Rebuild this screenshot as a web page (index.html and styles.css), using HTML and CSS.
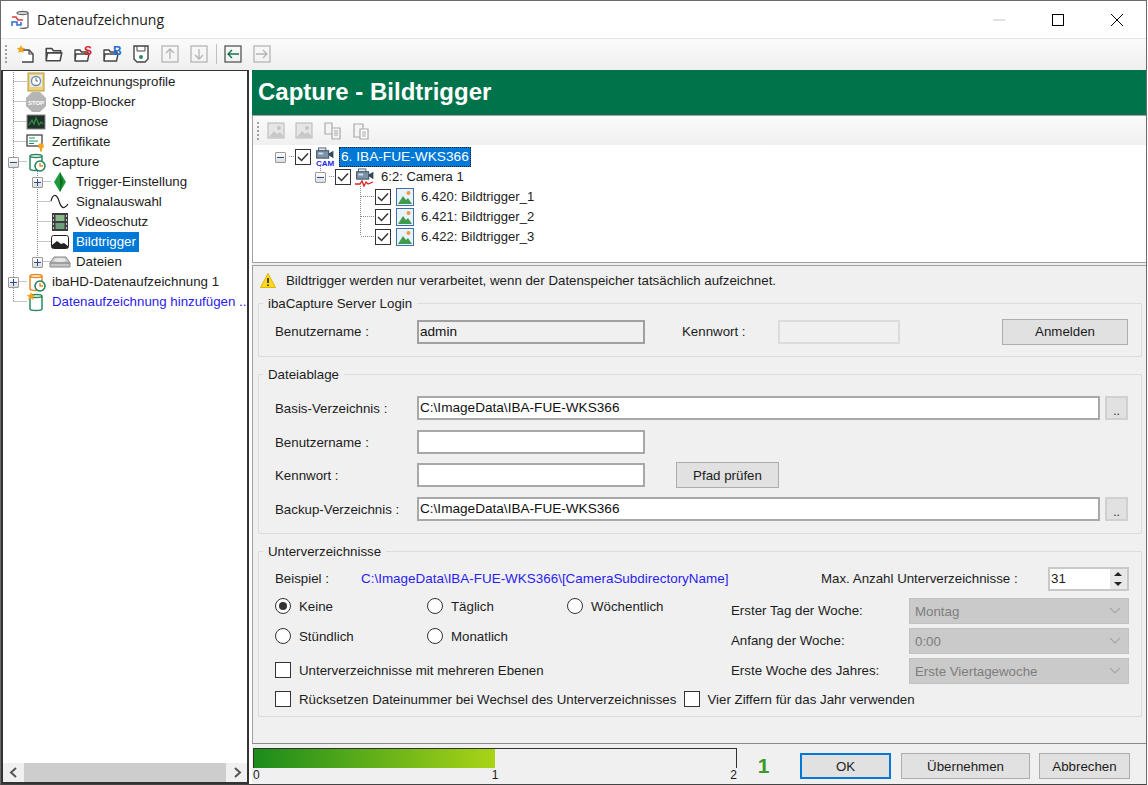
FILE: index.html
```html
<!DOCTYPE html>
<html lang="de">
<head>
    <meta charset="UTF-8">
    <title>Datenaufzeichnung</title>
    <link rel="stylesheet" href="styles.css">
</head>
<body>
<svg class="defs" width="0" height="0">
    <symbol id="i-cyl" viewBox="0 0 20 20"><path d="M4 4c0-2 12-2 12 0v13c0 2-12 2-12 0zM4 4c0 2 12 2 12 0" fill="#fff" stroke="currentColor" stroke-width="1.5"/></symbol>
    <symbol id="i-folder" viewBox="0 0 18 18"><path d="M2 15V4h5l1.500 2H15v2M2 15l1-7h13l-1.500 7z" fill="#fff" stroke="#444" stroke-width="1.400" stroke-linejoin="round"/></symbol>
    <symbol id="i-camera" viewBox="0 0 20 14"><rect x="1" y="4" width="13" height="8" fill="#7b93a8" stroke="#33475a"/><rect x="3" y="1" width="8" height="3" fill="#dfe6ec" stroke="#33475a" stroke-width=".8"/><path d="M14 7l5-3v8l-5-3z" fill="#33475a"/><rect x="3" y="6" width="5" height="2" fill="#d8e2ea"/></symbol>
    <symbol id="i-pic" viewBox="0 0 18 18"><rect x=".5" y=".5" width="17" height="17" fill="#eaf2fa" stroke="#3f6fa8"/><circle cx="12.500" cy="5" r="2" fill="#ef9a3c"/><path d="M2 16l5-8 3 4 2-2 4 6z" fill="#3f9c4b"/></symbol>
    <symbol id="i-pic-off" viewBox="0 0 20 20"><rect x="1" y="2" width="16" height="15" fill="#e6e6e6" stroke="#b5b5b5"/><circle cx="12" cy="7" r="2" fill="#c4c4c4"/><path d="M2 16l5-6 3 3 3-2 4 5z" fill="#c8c8c8"/></symbol>
    <symbol id="i-copy" viewBox="0 0 20 20"><path d="M2 2h7v11H2zM9 7h8v11H9z" fill="#f4f4f4" stroke="#a9a9a9" stroke-width="1.200"/><path d="M11 10h4M11 12h4M11 14h4" stroke="#a9a9a9"/></symbol>
    <symbol id="i-paste" viewBox="0 0 20 20"><path d="M3 3h9v13H3z" fill="#f4f4f4" stroke="#a9a9a9" stroke-width="1.200"/><path d="M9 8h8v10H9z" fill="#fff" stroke="#a9a9a9" stroke-width="1.200"/><path d="M11 11h4M11 13h4M11 15h4" stroke="#a9a9a9"/></symbol>
    <symbol id="i-check" viewBox="0 0 16 16"><path d="M3 8l3.500 3.500L13 4.500" fill="none" stroke="#333" stroke-width="1.500"/></symbol>
    <symbol id="i-chev" viewBox="0 0 12 8"><path d="M1 1l5 5 5-5" fill="none" stroke="#a8a8a8" stroke-width="1.200"/></symbol>
    <symbol id="i-clock" viewBox="0 0 12 12"><circle cx="6" cy="6" r="5" fill="#fff" stroke="#1f7f55" stroke-width="1.500"/><path d="M6 3v3h3" fill="none" stroke="#e8891d" stroke-width="1.300"/></symbol>
</svg>

<div class="window">
    <div class="titlebar">
        <svg class="app-icon" width="20" height="20" viewBox="0 0 20 20">
            <path d="M6 3c0-2 11-2 11 0v14c0 1.500-7 1.500-8 1" fill="#fff" stroke="#666" stroke-width="1.300"/>
            <path d="M6 3c0 2 11 2 11 0" fill="none" stroke="#666" stroke-width="1.300"/>
            <path d="M1 7h4l2 3h5" fill="none" stroke="#e23b3b" stroke-width="1.500"/>
            <path d="M1 16v-4h5v3h4v-3" fill="none" stroke="#2a6fd0" stroke-width="1.500"/>
        </svg>
        <span class="title">Datenaufzeichnung</span>
        <div class="winbtns">
            <svg width="12" height="12" viewBox="0 0 12 12"><path d="M0 6h12" stroke="#c4c4c4"/></svg>
            <svg width="12" height="12" viewBox="0 0 12 12"><rect x=".5" y=".5" width="11" height="11" fill="none" stroke="#000"/></svg>
            <svg width="12" height="12" viewBox="0 0 12 12"><path d="M0 0l12 12M12 0L0 12" stroke="#000"/></svg>
        </div>
    </div>

    <div class="toolbar">
        <span class="grip"></span>
        <svg class="tb tb-first" width="20" height="20" viewBox="0 0 20 20"><path d="M6 6h7l4 4v8H6" fill="#fff" stroke="#444" stroke-width="1.400"/><path d="M13 6v4h4" fill="none" stroke="#444" stroke-width="1.200"/><path d="M5 1l1.300 2.800 3 .3-2.200 2 .7 3L5 7.600 2.200 9.100l.7-3-2.200-2 3-.3z" fill="#f2a31c"/></svg>
        <svg class="tb" width="20" height="20"><use href="#i-folder"/></svg>
        <svg class="tb" width="20" height="20" viewBox="0 0 20 20"><use href="#i-folder" width="18" height="18" y="2"/><text x="11" y="11" class="tb-letter red">S</text></svg>
        <svg class="tb" width="20" height="20" viewBox="0 0 20 20"><use href="#i-folder" width="18" height="18" y="2"/><text x="11" y="11" class="tb-letter blue">B</text></svg>
        <svg class="tb" width="20" height="20" viewBox="0 0 20 20"><path d="M3 2h14v13l-3 3H6l-3-3z" fill="#fff" stroke="#444" stroke-width="1.400"/><path d="M6 2v5h8V2" fill="none" stroke="#444"/><circle cx="10" cy="13" r="2" fill="#2c8a5c"/></svg>
        <svg class="tb" width="20" height="20" viewBox="0 0 20 20"><rect x="2" y="2" width="16" height="16" fill="none" stroke="#b4b4b4" stroke-width="1.300"/><path d="M10 15V5M6 9l4-4 4 4" fill="none" stroke="#b4b4b4" stroke-width="1.300"/></svg>
        <svg class="tb" width="20" height="20" viewBox="0 0 20 20"><rect x="2" y="2" width="16" height="16" fill="none" stroke="#b4b4b4" stroke-width="1.300"/><path d="M10 5v10M6 11l4 4 4-4" fill="none" stroke="#b4b4b4" stroke-width="1.300"/></svg>
        <span class="tb-sep"></span>
        <svg class="tb" width="20" height="20" viewBox="0 0 20 20"><rect x="2" y="2" width="16" height="16" fill="none" stroke="#555" stroke-width="1.300"/><path d="M16 10H5M9 6l-4 4 4 4" fill="none" stroke="#11794f" stroke-width="1.400"/></svg>
        <svg class="tb" width="20" height="20" viewBox="0 0 20 20"><rect x="2" y="2" width="16" height="16" fill="none" stroke="#b4b4b4" stroke-width="1.300"/><path d="M4 10h11M11 6l4 4-4 4" fill="none" stroke="#b4b4b4" stroke-width="1.300"/></svg>
    </div>

    <div class="main">
        <!-- left navigation tree -->
        <div class="nav">
            <div class="nav-tree">
                <svg class="guides" width="244" height="240">
                    <path d="M10.500 0v229M10.500 9.500h14M10.500 29.500h14M10.500 49.500h14M10.500 69.500h14M10.500 89.500h14M10.500 209.500h14M10.500 229.500h14M34.500 99v90M34.500 109.500h14M34.500 129.500h14M34.500 149.500h14M34.500 169.500h14M34.500 189.500h14" fill="none" stroke="#8a8a8a" stroke-dasharray="1 1"/>
                </svg>
                <div class="node"><span class="slot"></span><span class="slot-icon">
                    <svg width="20" height="20" viewBox="0 0 20 20"><rect x="2" y="1" width="16" height="18" fill="#ecd27a" stroke="#b5963c"/><rect x="4" y="3" width="12" height="12" fill="#dfe9f2"/><circle cx="10" cy="9" r="4.500" fill="#fff" stroke="#6d89a6" stroke-width="1.300"/><path d="M10 6v3h2" fill="none" stroke="#567"/></svg>
                </span><span class="node-text">Aufzeichnungsprofile</span></div>
                <div class="node"><span class="slot"></span><span class="slot-icon">
                    <svg width="22" height="20" viewBox="0 0 22 20"><path d="M7 0h8l6 6v8l-6 6H7l-6-6V6z" fill="#b5b5b5"/><text x="11" y="12.500" class="stop-text">STOP</text></svg>
                </span><span class="node-text">Stopp-Blocker</span></div>
                <div class="node"><span class="slot"></span><span class="slot-icon">
                    <svg width="20" height="18" viewBox="0 0 20 18"><rect x="1" y="2" width="18" height="14" fill="#20302a" stroke="#888"/><path d="M3 12l3-5 2 4 2-6 3 7 2-3 2 2" fill="none" stroke="#2f8f3f" stroke-width="1.300"/></svg>
                </span><span class="node-text">Diagnose</span></div>
                <div class="node"><span class="slot"></span><span class="slot-icon">
                    <svg width="20" height="20" viewBox="0 0 20 20"><rect x="1" y="3" width="15" height="11" fill="#fff" stroke="#444" stroke-width="1.300"/><path d="M3 6h6M3 9h9M3 11.500h5" stroke="#1e9468"/><circle cx="15" cy="14" r="2.800" fill="#f2a31c"/><path d="M14 16v4l1-1 1 1v-4" fill="#f2a31c"/></svg>
                </span><span class="node-text">Zertifikate</span></div>
                <div class="node"><span class="slot"><span class="exp minus"></span></span><span class="slot-icon capture">
                    <svg width="20" height="20"><use href="#i-cyl"/><use href="#i-clock" x="8" y="8" width="12" height="12"/></svg>
                </span><span class="node-text">Capture</span></div>
                <div class="node l1"><span class="slot"><span class="exp plus"></span></span><span class="slot-icon">
                    <svg width="14" height="20" viewBox="0 0 14 20"><path d="M7 0l6 10-6 10-6-10z" fill="#1f9a3a"/><path d="M7 0l3 10-3 10z" fill="#0f6b26"/></svg>
                </span><span class="node-text">Trigger-Einstellung</span></div>
                <div class="node l1"><span class="slot"></span><span class="slot-icon">
                    <svg width="20" height="16" viewBox="0 0 20 16"><path d="M1 7c2-8 6-7 8 0s5 9 9 3" fill="none" stroke="#222" stroke-width="1.200"/></svg>
                </span><span class="node-text">Signalauswahl</span></div>
                <div class="node l1"><span class="slot"></span><span class="slot-icon">
                    <svg width="16" height="20" viewBox="0 0 16 20"><rect x="0" y="1" width="16" height="18" fill="#3c3c3c"/><rect x="3.500" y="3" width="9" height="6" fill="#8ab88a"/><rect x="3.500" y="11" width="9" height="6" fill="#6f9f7a"/><path d="M1.500 3v14M14.500 3v14" stroke="#ccc" stroke-dasharray="2 2"/></svg>
                </span><span class="node-text">Videoschutz</span></div>
                <div class="node l1"><span class="slot"></span><span class="slot-icon">
                    <svg width="18" height="14" viewBox="0 0 18 14"><rect x=".5" y=".5" width="17" height="13" rx="2" fill="#fff" stroke="#222"/><path d="M1 13V10l5-4 4 3 3-1 4 3v2z" fill="#222"/></svg>
                </span><span class="node-text selected">Bildtrigger</span></div>
                <div class="node l1"><span class="slot"><span class="exp plus"></span></span><span class="slot-icon">
                    <svg width="22" height="14" viewBox="0 0 22 14"><path d="M5 2h12l4 6v4H1V8z" fill="#c6c6c6" stroke="#888"/><path d="M1 8h20" stroke="#777"/><ellipse cx="11" cy="5" rx="6" ry="2" fill="#e8e8e8"/></svg>
                </span><span class="node-text">Dateien</span></div>
                <div class="node"><span class="slot"><span class="exp plus"></span></span><span class="slot-icon hd">
                    <svg width="20" height="20"><use href="#i-cyl"/><use href="#i-clock" x="8" y="8" width="12" height="12"/></svg>
                </span><span class="node-text">ibaHD-Datenaufzeichnung 1</span></div>
                <div class="node"><span class="slot"></span><span class="slot-icon capture">
                    <svg width="20" height="20" viewBox="0 0 20 20"><use href="#i-cyl"/><path d="M5 0l1.300 2.800 3 .3-2.200 2 .7 3L5 6.600 2.200 8.100l.7-3-2.200-2 3-.3z" fill="#f2a31c"/></svg>
                </span><span class="node-text add">Datenaufzeichnung hinzufügen ...</span></div>
            </div>
            <div class="hscroll">
                <svg width="21" height="19" viewBox="0 0 21 19"><path d="M13 5l-5 4.500 5 4.500" fill="none" stroke="#555" stroke-width="2"/></svg>
                <span class="thumb"></span>
                <svg width="21" height="19" viewBox="0 0 21 19"><path d="M9 5l5 4.500-5 4.500" fill="none" stroke="#555" stroke-width="2"/></svg>
            </div>
        </div>

        <div class="content">
            <div class="header">Capture - Bildtrigger</div>

            <div class="trigger-panel">
                <div class="subtoolbar">
                    <span class="grip"></span>
                    <svg class="tb2" width="20" height="20"><use href="#i-pic-off"/></svg>
                    <svg class="tb2" width="20" height="20"><use href="#i-pic-off"/></svg>
                    <svg class="tb2" width="20" height="20"><use href="#i-copy"/></svg>
                    <svg class="tb2" width="20" height="20"><use href="#i-paste"/></svg>
                </div>
                <div class="cam-tree">
                    <svg class="guides" width="130" height="100">
                        <path d="M36 10.500h10M67.500 20v10M76 30.500h10M107.500 40v50M108 50.500h16M108 70.500h16M108 90.500h16" fill="none" stroke="#8a8a8a" stroke-dasharray="1 1"/>
                    </svg>
                    <div class="cam-row">
                        <span class="slot"><span class="exp minus"></span></span>
                        <span class="tick"><svg width="16" height="16"><use href="#i-check"/></svg></span>
                        <span class="cam-icon">
                            <svg width="20" height="13"><use href="#i-camera"/></svg>
                            <span class="cam-label">CAM</span>
                        </span>
                        <span class="cam-text focused">6. IBA-FUE-WKS366</span>
                    </div>
                    <div class="cam-row lvl1">
                        <span class="slot"><span class="exp minus"></span></span>
                        <span class="tick"><svg width="16" height="16"><use href="#i-check"/></svg></span>
                        <span class="cam-icon">
                            <svg width="20" height="19" viewBox="0 0 20 19"><use href="#i-camera" width="20" height="13"/><path d="M0 16h5l2-3 2 5 2-4 2 2 5-2" fill="none" stroke="#e02020" stroke-width="1.300"/></svg>
                        </span>
                        <span class="cam-text">6:2: Camera 1</span>
                    </div>
                    <div class="cam-row lvl2">
                        <span class="slot"></span>
                        <span class="tick"><svg width="16" height="16"><use href="#i-check"/></svg></span>
                        <span class="cam-icon"><svg width="18" height="18"><use href="#i-pic"/></svg></span>
                        <span class="cam-text">6.420: Bildtrigger_1</span>
                    </div>
                    <div class="cam-row lvl2">
                        <span class="slot"></span>
                        <span class="tick"><svg width="16" height="16"><use href="#i-check"/></svg></span>
                        <span class="cam-icon"><svg width="18" height="18"><use href="#i-pic"/></svg></span>
                        <span class="cam-text">6.421: Bildtrigger_2</span>
                    </div>
                    <div class="cam-row lvl2">
                        <span class="slot"></span>
                        <span class="tick"><svg width="16" height="16"><use href="#i-check"/></svg></span>
                        <span class="cam-icon"><svg width="18" height="18"><use href="#i-pic"/></svg></span>
                        <span class="cam-text">6.422: Bildtrigger_3</span>
                    </div>
                </div>
            </div>

            <div class="form-panel">
                <div class="warning">
                    <svg width="16" height="15" viewBox="0 0 16 15"><path d="M8 .5L15.500 14.500H.5z" fill="#ffd91c" stroke="#e0b500"/><path d="M8 5v5M8 11.500v1.500" stroke="#222" stroke-width="1.600"/></svg>
                    <span>Bildtrigger werden nur verarbeitet, wenn der Datenspeicher tatsächlich aufzeichnet.</span>
                </div>

                <fieldset class="group group-login">
                    <legend>ibaCapture Server Login</legend>
                    <div class="login-row">
                        <label class="lbl">Benutzername :</label>
                        <div class="input readonly w-short">admin</div>
                        <label class="lbl lbl-pw">Kennwort :</label>
                        <div class="input off w-pw"></div>
                        <button class="btn btn-login">Anmelden</button>
                    </div>
                </fieldset>

                <fieldset class="group group-files">
                    <legend>Dateiablage</legend>
                    <div class="files-grid">
                        <label class="lbl">Basis-Verzeichnis :</label>
                        <div class="input w-long">C:\ImageData\IBA-FUE-WKS366</div>
                        <button class="btn btn-dots">..</button>

                        <label class="lbl">Benutzername :</label>
                        <div class="input w-short"></div>
                        <span></span>

                        <label class="lbl">Kennwort :</label>
                        <div class="pw-row">
                            <div class="input w-short"></div>
                            <button class="btn btn-path">Pfad prüfen</button>
                        </div>
                        <span></span>

                        <label class="lbl">Backup-Verzeichnis :</label>
                        <div class="input w-long">C:\ImageData\IBA-FUE-WKS366</div>
                        <button class="btn btn-dots">..</button>
                    </div>
                </fieldset>

                <fieldset class="group group-sub">
                    <legend>Unterverzeichnisse</legend>
                    <div class="sub-top">
                        <label class="lbl lbl-sample">Beispiel :</label>
                        <span class="sample">C:\ImageData\IBA-FUE-WKS366\[CameraSubdirectoryName]</span>
                        <label class="lbl lbl-max">Max. Anzahl Unterverzeichnisse :</label>
                        <div class="spin">
                            <span class="spin-val">31</span>
                            <span class="spin-btns">
                                <svg width="16" height="10" viewBox="0 0 16 10"><path d="M8 3l-4 4h8z" fill="#222"/></svg>
                                <svg width="16" height="10" viewBox="0 0 16 10"><path d="M8 7L4 3h8z" fill="#222"/></svg>
                            </span>
                        </div>
                    </div>
                    <div class="sub-mid">
                        <div class="options">
                            <div class="opt"><span class="radio on"></span>Keine</div>
                            <div class="opt"><span class="radio"></span>Täglich</div>
                            <div class="opt"><span class="radio"></span>Wöchentlich</div>
                            <div class="opt"><span class="radio"></span>Stündlich</div>
                            <div class="opt"><span class="radio"></span>Monatlich</div>
                            <div class="opt"></div>
                            <div class="opt opt-wide"><span class="box"></span>Unterverzeichnisse mit mehreren Ebenen</div>
                        </div>
                        <div class="week">
                            <label class="lbl">Erster Tag der Woche:</label>
                            <div class="select">Montag<svg width="12" height="8"><use href="#i-chev"/></svg></div>
                            <label class="lbl">Anfang der Woche:</label>
                            <div class="select">0:00<svg width="12" height="8"><use href="#i-chev"/></svg></div>
                            <label class="lbl">Erste Woche des Jahres:</label>
                            <div class="select">Erste Viertagewoche<svg width="12" height="8"><use href="#i-chev"/></svg></div>
                        </div>
                    </div>
                    <div class="sub-bottom">
                        <div class="opt"><span class="box"></span>Rücksetzen Dateinummer bei Wechsel des Unterverzeichnisses</div>
                        <div class="opt opt-year"><span class="box"></span>Vier Ziffern für das Jahr verwenden</div>
                    </div>
                </fieldset>
            </div>

            <div class="footer">
                <div class="meter">
                    <div class="meter-track"><div class="meter-fill"></div></div>
                    <div class="meter-scale"><span>0</span><span>1</span><span>2</span></div>
                </div>
                <span class="count">1</span>
                <button class="btn btn-ok">OK</button>
                <button class="btn btn-apply">Übernehmen</button>
                <button class="btn btn-cancel">Abbrechen</button>
            </div>
        </div>
    </div>
</div>
</body>
</html>
```

FILE: styles.css
```css
* {
    box-sizing: border-box;
}
html, body {
    margin: 0;
    height: 100%;
    background: #fff;
}
body {
    font-family: "Liberation Sans", Arial, sans-serif;
    font-size: 13.3px;
    color: #1c1c1c;
    overflow: hidden;
}
.defs {
    position: absolute;
}
.window {
    width: 1147px;
    height: 785px;
    display: flex;
    flex-direction: column;
    border-top: 1px solid #6a6a6a;
    border-left: 1px solid #6a6a6a;
    border-right: 1px solid #6a6a6a;
    border-bottom: 1px solid #444;
}

/* title bar */
.titlebar {
    height: 37px;
    display: flex;
    align-items: center;
    padding-left: 10px;
    background: #fff;
}
.app-icon {
    margin-right: 6px;
}
.title {
    font-family: "Open Sans", "Liberation Sans", sans-serif;
    font-size: 14px;
}
.winbtns {
    margin-left: auto;
    display: flex;
    gap: 47px;
    padding-right: 23px;
}

/* toolbars */
.toolbar {
    height: 32px;
    display: flex;
    align-items: center;
    padding: 0 0 2px 4px;
    background: linear-gradient(#fbfbfb, #efefef);
    border-top: 1px solid #e6e6e6;
}
.grip {
    width: 2px;
    height: 18px;
    margin-right: 9px;
    background: repeating-linear-gradient(#a0a0a0 0 2px, transparent 2px 4px);
}
.tb {
    margin-right: 9px;
}
.tb-first {
    margin-right: 8px;
}
.tb-sep {
    width: 1px;
    height: 20px;
    margin: 0 6px 0 -2px;
    background: #c0c0c0;
}
.tb-letter {
    font-family: "Liberation Sans", sans-serif;
    font-size: 12px;
    font-weight: bold;
}
.red {
    fill: #e0202c;
}
.blue {
    fill: #2a6fd0;
}

.main {
    flex: 1;
    display: flex;
    min-height: 0;
}

/* navigation tree */
.nav {
    width: 248px;
    margin-right: 3px;
    display: flex;
    flex-direction: column;
    background: #fff;
    border-top: 1px solid #333;
    border-left: 2px solid #333;
    border-right: 2px solid #333;
    border-bottom: 2px solid #333;
}
.nav-tree {
    flex: 1;
    position: relative;
    overflow: hidden;
    padding-top: 1px;
}
.guides {
    position: absolute;
    left: 0;
    top: 1px;
}
.node {
    height: 20px;
    display: flex;
    align-items: center;
    position: relative;
    white-space: nowrap;
}
.node.l1 {
    padding-left: 24px;
}
.slot {
    width: 20px;
    flex: none;
    display: flex;
    align-items: center;
    justify-content: center;
}
.slot-icon {
    width: 26px;
    flex: none;
    display: flex;
    justify-content: center;
    align-items: center;
}
.slot-icon svg {
    display: block;
}
.capture {
    color: #2a8a5e;
}
.hd {
    color: #e8891d;
}
.node-text {
    padding: 0 3px;
    line-height: 20px;
}
.selected {
    background: #0078d7;
    color: #fff;
}
.add {
    color: #2a1cf0;
}
.exp {
    width: 11px;
    height: 11px;
    border: 1px solid #9a9a9a;
    border-radius: 1px;
    background: linear-gradient(#fff, #dcdcdc);
    position: relative;
}
.exp::before {
    content: "";
    position: absolute;
    left: 1px;
    top: 4px;
    width: 7px;
    height: 1px;
    background: #2b4a8b;
}
.exp.plus::after {
    content: "";
    position: absolute;
    left: 4px;
    top: 1px;
    width: 1px;
    height: 7px;
    background: #2b4a8b;
}
.hscroll {
    height: 19px;
    display: flex;
    align-items: center;
    background: #f0f0f0;
}
.thumb {
    flex: 1;
    height: 19px;
    background: #cdcdcd;
}

/* right side */
.content {
    flex: 1;
    min-width: 0;
    display: flex;
    flex-direction: column;
    background: #f0f0f0;
}
.header {
    height: 45px;
    padding-left: 6px;
    background: #00734a;
    color: #fff;
    font-size: 24px;
    font-weight: bold;
    line-height: 44px;
}
.trigger-panel {
    height: 148px;
    background: #fff;
    border-top: 1px solid #a0a0a0;
    border-left: 1px solid #a0a0a0;
    border-bottom: 1px solid #a0a0a0;
}
.subtoolbar {
    height: 29px;
    display: flex;
    align-items: center;
    padding-left: 4px;
    background: linear-gradient(#fbfbfb, #f0f0f0);
}
.subtoolbar .grip {
    margin-right: 8px;
}
.tb2 {
    margin-right: 8px;
}
.cam-tree {
    position: relative;
    padding: 2px 0 0 17px;
}
.cam-row {
    height: 20px;
    display: flex;
    align-items: center;
    position: relative;
    white-space: nowrap;
}
.cam-row.lvl1 {
    padding-left: 40px;
}
.cam-row.lvl2 {
    padding-left: 80px;
}
.tick {
    width: 16px;
    height: 16px;
    margin-left: 5px;
    border: 1px solid #333;
    background: #fff;
    flex: none;
}
.tick svg {
    display: block;
    margin: -1px;
}
.cam-icon {
    width: 26px;
    flex: none;
    margin-left: 1px;
    display: flex;
    flex-direction: column;
    align-items: center;
    line-height: 8px;
}
.cam-label {
    font-size: 8px;
    font-weight: bold;
    color: #1c28e0;
}
.cam-text {
    margin-left: 1px;
    padding: 0 2px;
    line-height: 20px;
    font-size: 13.05px;
}
.cam-text.focused {
    font-size: 13.7px;
    background: #0078d7;
    color: #fff;
    outline: 1px dotted #222;
    outline-offset: -1px;
}
.stop-text {
    font-family: "Liberation Sans", sans-serif;
    font-size: 6px;
    font-weight: bold;
    fill: #fff;
    text-anchor: middle;
}

/* form */
.form-panel {
    height: 479px;
    margin-top: 2px;
    padding: 0 4px 0 5px;
    border-top: 1px solid #a0a0a0;
    border-left: 1px solid #a0a0a0;
    border-bottom: 1px solid #8a8a8a;
}
.warning {
    height: 29px;
    display: flex;
    align-items: center;
    gap: 10px;
    padding-left: 2px;
}
.group {
    margin: 0;
    padding: 0 0 0 16px;
    border: 1px solid #dcdcdc;
    border-radius: 1px;
    min-inline-size: 0;
}
.group legend {
    margin-left: -12px;
    padding: 0 5px;
    height: 16px;
    line-height: 18px;
}
.group-login {
    height: 62px;
}
.group-files {
    height: 168px;
    margin-top: 9px;
}
.group-sub {
    height: 174px;
    margin-top: 9px;
}
.lbl {
    white-space: nowrap;
}
.input {
    height: 24px;
    padding-left: 1px;
    border: 2px solid #a8a8a8;
    background: #fff;
    line-height: 20px;
    font-size: 13.6px;
    color: #111;
}
.input.readonly {
    background: #f0f0f0;
    border-color: #a0a0a0;
    line-height: 19px;
}
.input.off {
    background: #f0f0f0;
    border-color: #dcdcdc;
}
.w-short {
    width: 228px;
}
.w-long {
    width: 683px;
}
.w-pw {
    width: 122px;
}
.btn {
    font: inherit;
    color: #1c1c1c;
    padding: 0;
    border: 1px solid #adadad;
    background: #e1e1e1;
}
.login-row {
    display: flex;
    align-items: center;
    padding-top: 7px;
    height: 34px;
}
.login-row .lbl:first-child {
    width: 142px;
}
.lbl-pw {
    margin-left: 37px;
    width: 96px;
}
.btn-login {
    width: 126px;
    height: 26px;
    margin-left: 102px;
}
.files-grid {
    display: grid;
    grid-template-columns: 142px 688px 23px;
    grid-template-rows: 34px 33px 34px 24px;
    padding-top: 14px;
    align-items: start;
}
.files-grid .lbl {
    line-height: 26px;
}
.btn-dots {
    height: 24px;
    line-height: 26px;
    border-width: 2px;
    border-color: #d0d0d0;
    font-size: 12px;
}
.pw-row {
    display: flex;
    align-items: flex-start;
}
.btn-path {
    width: 103px;
    height: 26px;
    margin: -1px 0 0 31px;
}
.sub-top {
    height: 32px;
    padding-top: 8px;
    display: flex;
    align-items: center;
}
.sub-top .lbl, .sample {
    padding-bottom: 2px;
}
.lbl-sample {
    width: 86px;
}
.sample {
    width: 460px;
    white-space: nowrap;
    color: #2a1cf0;
    font-size: 13.45px;
}
.lbl-max {
    width: 227px;
}
.spin {
    width: 81px;
    height: 24px;
    display: flex;
    border: 2px solid #c8c8c8;
    background: #fff;
    line-height: 20px;
    padding-left: 1px;
}
.spin-val {
    flex: 1;
}
.spin-btns {
    width: 17px;
    display: flex;
    flex-direction: column;
    background: #e8e8e8;
}
.spin-btns svg {
    display: block;
}
.sub-mid {
    display: flex;
    height: 94px;
}
.options {
    width: 456px;
    display: grid;
    grid-template-columns: 152px 140px 1fr;
    grid-template-rows: 30px 30px 34px;
}
.opt {
    display: flex;
    align-items: center;
    gap: 8px;
    white-space: nowrap;
}
.opt-wide {
    grid-column: 1 / 4;
    padding-top: 4px;
}
.radio {
    width: 16px;
    height: 16px;
    flex: none;
    border: 1px solid #333;
    border-radius: 50%;
    background: #fff;
    position: relative;
}
.radio.on::after {
    content: "";
    position: absolute;
    left: 3px;
    top: 3px;
    width: 8px;
    height: 8px;
    border-radius: 50%;
    background: #333;
}
.box {
    width: 16px;
    height: 16px;
    flex: none;
    border: 1px solid #333;
    background: #fff;
}
.week {
    display: grid;
    grid-template-columns: 178px 220px;
    grid-auto-rows: 30px;
    padding-top: 7px;
}
.week .lbl {
    line-height: 26px;
}
.select {
    height: 26px;
    display: flex;
    align-items: center;
    justify-content: space-between;
    padding: 0 7px 0 5px;
    background: #cacaca;
    border: 1px solid #c2c2c2;
    color: #7d7d7d;
}
.sub-bottom {
    display: flex;
    height: 20px;
    margin-top: 4px;
}
.opt-year {
    margin-left: 8px;
    gap: 7px;
}

/* bottom bar */
.footer {
    flex: 1;
    display: flex;
    align-items: flex-start;
    padding: 9px 0 0 1px;
    position: relative;
}
.meter {
    width: 484px;
    margin-top: -5px;
}
.meter-track {
    height: 20px;
    border-top: 1px solid #333;
    border-right: 1px solid #333;
    border-left: 1px solid #333;
}
.meter-fill {
    width: 50%;
    height: 19px;
    background: linear-gradient(90deg, #1b8b1c, #a9d416);
}
.meter-scale {
    display: flex;
    justify-content: space-between;
    font-size: 12px;
    line-height: 15px;
}
.count {
    width: 63px;
    padding-right: 10px;
    text-align: center;
    font-size: 21px;
    font-weight: bold;
    line-height: 26px;
    color: #3a9a28;
}
.btn-ok {
    width: 91px;
    height: 26px;
    border: 2px solid #0078d7;
}
.btn-apply {
    width: 129px;
    height: 26px;
    margin-left: 10px;
}
.btn-cancel {
    width: 91px;
    height: 26px;
    margin-left: 9px;
}
```
